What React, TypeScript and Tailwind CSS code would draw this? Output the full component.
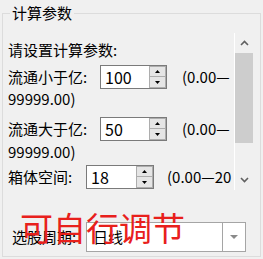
import React from "react";

type NumBoxProps = {
  value: string
  width: string
};

const Caret = ({ up }: { up?: boolean }) => (
  <svg width="5" height="3" viewBox="0 0 5 3" className="block">
    <polygon points={up ? "2.5,0 5,3 0,3" : "0,0 5,0 2.5,3"} fill="#000" />
  </svg>
);

const NumBox = ({ value, width }: NumBoxProps) => (
  <div className={`${width} flex h-[24px] shrink-0 border border-[#7a7a7a] bg-white`}>
    <div className="min-w-0 flex-1 pl-[4px] text-[16px] leading-[22px] text-black">{value}</div>
    <div className="flex w-[17px] flex-col">
      <div className="flex h-[11px] items-center justify-center border border-[#adadad] bg-[#e5e5e5]">
        <Caret up />
      </div>
      <div className="flex h-[11px] items-center justify-center border border-t-0 border-[#adadad] bg-[#e5e5e5]">
        <Caret />
      </div>
    </div>
  </div>
);

const Chevron = ({ down }: { down?: boolean }) => (
  <svg width="9" height="6" viewBox="0 0 9 6" className="block">
    <polyline
      points={down ? "1,1 4.5,4.5 8,1" : "1,5 4.5,1.5 8,5"}
      fill="none"
      stroke="#606060"
      strokeWidth="1.6"
    />
  </svg>
);

export default function App() {
  return (
    <div className="relative h-[259px] w-[263px] overflow-hidden bg-[#f0f0f0] font-['Noto_Sans_CJK_SC','Noto_Sans',sans-serif] text-[15px] text-black">
      <fieldset className="ml-[2px] mt-[3px] h-[254px] w-[259px] border border-[#dcdcdc]">
        <legend className="ml-[7px] px-[2px] leading-[20px]">计算参数</legend>

        <div className="mt-[10px] flex h-[157px] w-[250px]">
          <div className="w-[231px] overflow-hidden pl-[5px] pt-[7px]">
            <div className="h-[20px] leading-[20px]">请设置计算参数:</div>

            <div className="mt-[5px] flex h-[24px] items-center whitespace-nowrap">
              <span className="w-[92px] shrink-0">流通小于亿:</span>
              <NumBox value="100" width="w-[67px]" />
              <span className="ml-[15px]">(0.00—</span>
            </div>
            <div className="mt-[1px] h-[18px] leading-[18px]">99999.00)</div>

            <div className="mt-[9px] flex h-[24px] items-center whitespace-nowrap">
              <span className="w-[92px] shrink-0">流通大于亿:</span>
              <NumBox value="50" width="w-[67px]" />
              <span className="ml-[15px]">(0.00—</span>
            </div>
            <div className="mt-[2px] h-[18px] leading-[18px]">99999.00)</div>

            <div className="mt-[4px] flex h-[24px] items-center whitespace-nowrap">
              <span className="w-[78px] shrink-0">箱体空间:</span>
              <NumBox value="18" width="w-[68px]" />
              <span className="ml-[13px]">(0.00—20</span>
            </div>
          </div>

          <div className="flex w-[19px] flex-col border-l border-white bg-[#f0f0f0]">
            <div className="flex h-[20px] items-center justify-center">
              <Chevron />
            </div>
            <div className="h-[90px] bg-[#cdcdcd]" />
            <div className="flex-1" />
            <div className="flex h-[20px] items-center justify-center">
              <Chevron down />
            </div>
          </div>
        </div>

        <div className="mt-[32px] flex items-center pl-[9px]">
          <span className="w-[74px] shrink-0">选股周期:</span>
          <div className="flex h-[30px] w-[160px] border border-[#a5a5a5] bg-white">
            <div className="flex-1 pl-[6px] leading-[28px]">日线</div>
            <div className="flex w-[23px] items-center justify-center border-l border-[#a5a5a5]">
              <svg width="8" height="4" viewBox="0 0 8 4" className="block">
                <polygon points="0,0 8,0 4,4" fill="#8a8a8a" />
              </svg>
            </div>
          </div>
        </div>
      </fieldset>

      <div className="absolute left-[20px] top-[211px] text-[33px] leading-none text-[#e8201c]">
        可自行调节
      </div>
    </div>
  );
}
